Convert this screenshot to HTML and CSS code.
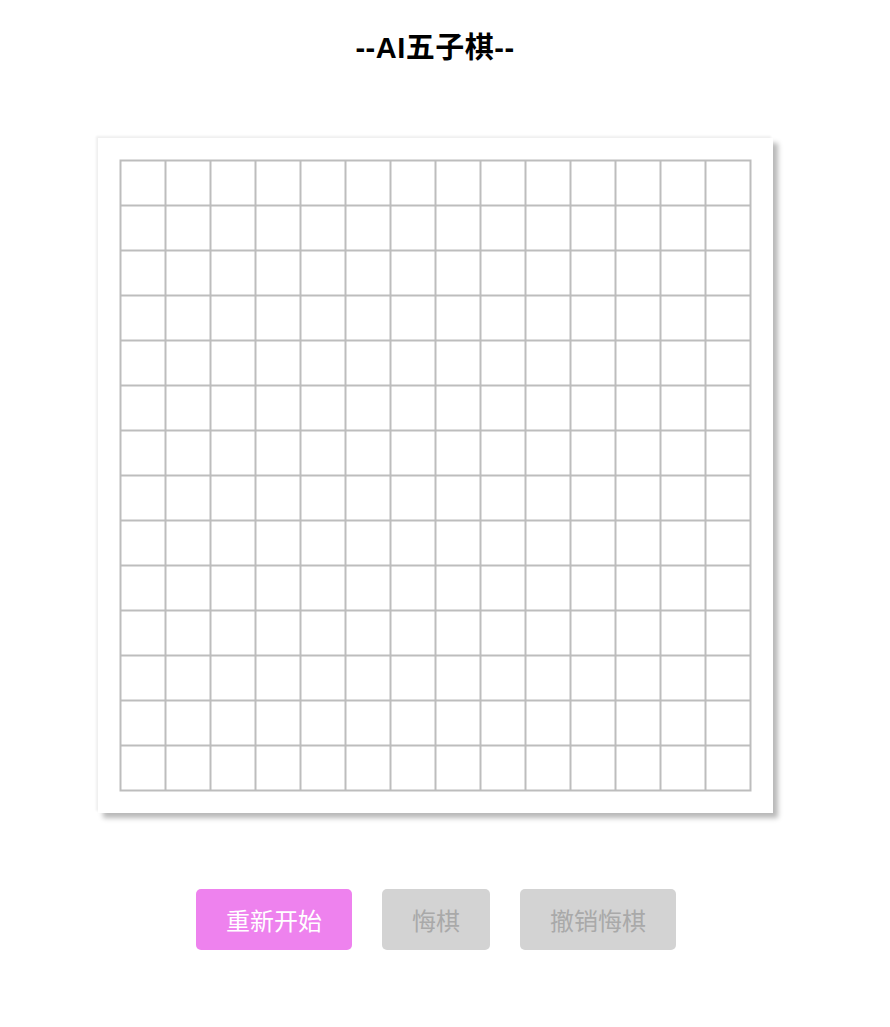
FILE: index.html
```html
<!DOCTYPE html>
<html>
<head>
    <meta charset="utf-8">
    <title>AI五子棋</title>
    <link rel="stylesheet" href="styles.css">
</head>
<body>
    <div id="game-container">

     <h1 class="title">--AI五子棋--</h1>

     <div class="board">
        <svg class="board-grid" width="675" height="675" viewBox="0 0 675 675">
            <path d="M22.5 22.5 H652.5 M22.5 67.5 H652.5 M22.5 112.5 H652.5 M22.5 157.5 H652.5 M22.5 202.5 H652.5
                     M22.5 247.5 H652.5 M22.5 292.5 H652.5 M22.5 337.5 H652.5 M22.5 382.5 H652.5 M22.5 427.5 H652.5
                     M22.5 472.5 H652.5 M22.5 517.5 H652.5 M22.5 562.5 H652.5 M22.5 607.5 H652.5 M22.5 652.5 H652.5
                     M22.5 22.5 V652.5 M67.5 22.5 V652.5 M112.5 22.5 V652.5 M157.5 22.5 V652.5 M202.5 22.5 V652.5
                     M247.5 22.5 V652.5 M292.5 22.5 V652.5 M337.5 22.5 V652.5 M382.5 22.5 V652.5 M427.5 22.5 V652.5
                     M472.5 22.5 V652.5 M517.5 22.5 V652.5 M562.5 22.5 V652.5 M607.5 22.5 V652.5 M652.5 22.5 V652.5"
                  stroke="#bdbdbd" stroke-width="2" stroke-linecap="square" fill="none"/>
        </svg>
     </div>

     <div class="controls">
        <button class="btn restart">重新开始</button>
        <button class="btn disabled">悔棋</button>
        <button class="btn disabled">撤销悔棋</button>
     </div>
    </div>
</body>
</html>
```

FILE: styles.css
```css
body {
    font-family: "Noto Sans CJK SC", "Noto Sans", sans-serif;
    background-color: #ffffff;
    margin: 0;
    padding: 0;
}

#game-container {
    width: 870px;
    text-align: center;
}

.title {
    font-family: "Liberation Sans", "Noto Sans CJK SC", sans-serif;
    font-size: 29px;
    font-weight: bold;
    letter-spacing: 0.5px;
    line-height: 40px;
    margin: 28px 0 0;
    color: #000;
}

.board {
    width: 675px;
    height: 675px;
    margin: 70px auto 0;
    background-color: #ffffff;
    box-shadow: -2px -2px 2px #efefef, 5px 5px 5px #b9b9b9;
}

.board-grid {
    display: block;
}

.controls {
    display: flex;
    justify-content: center;
    gap: 30px;
    margin-top: 76px;
    padding-left: 2px;
}

.btn {
    height: 61px;
    padding: 0 30px;
    border: none;
    border-radius: 5px;
    font-family: "Noto Sans CJK SC", sans-serif;
    font-size: 24px;
    cursor: pointer;
}

.restart {
    background-color: #ee82ee;
    color: #fff;
}

.disabled {
    background-color: #d3d3d3;
    color: #a9a9a9;
    cursor: default;
}
```
